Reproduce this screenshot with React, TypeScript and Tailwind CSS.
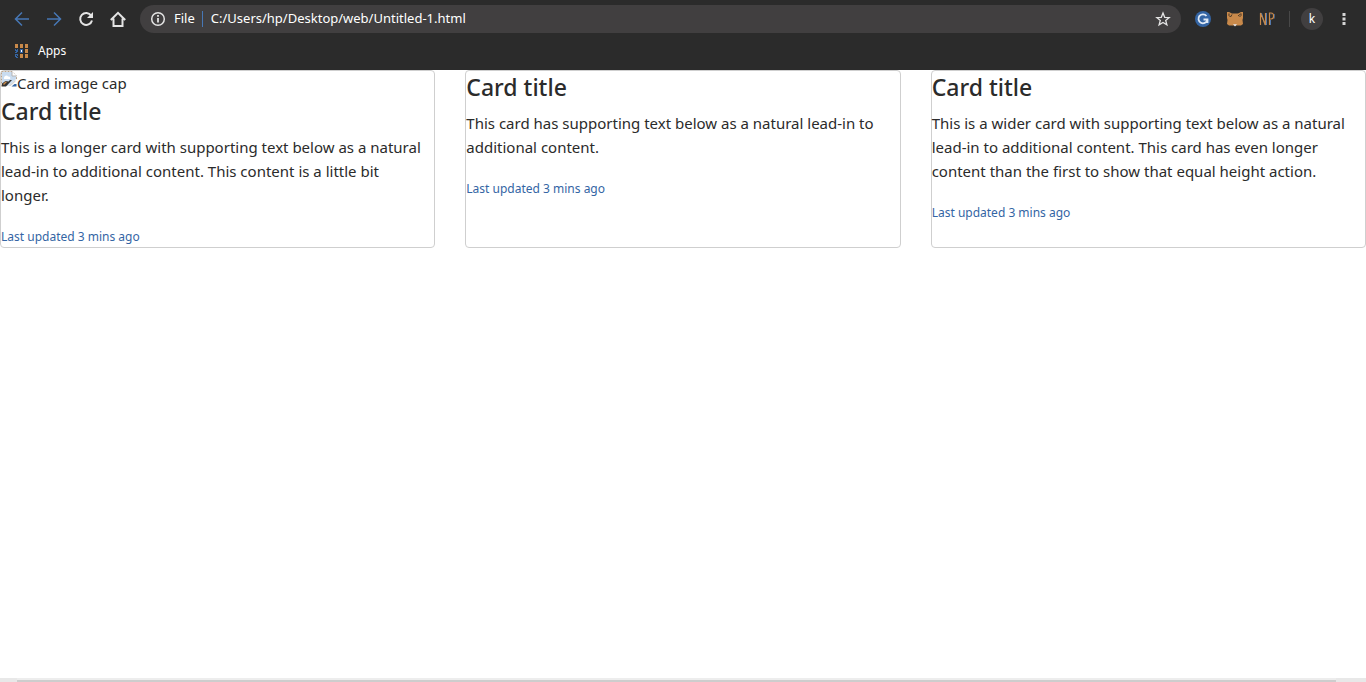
import React from "react";

const cards = [
  {
    image: true,
    text: "This is a longer card with supporting text below as a natural lead-in to additional content. This content is a little bit longer.",
  },
  {
    image: false,
    text: "This card has supporting text below as a natural lead-in to additional content.",
  },
  {
    image: false,
    text: "This is a wider card with supporting text below as a natural lead-in to additional content. This card has even longer content than the first to show that equal height action.",
  },
];

function Icon({ children }: { children: React.ReactNode }) {
  return (
    <svg viewBox="0 0 16 16" className="size-4 shrink-0" fill="none" aria-hidden="true">
      {children}
    </svg>
  );
}

function BrokenImage() {
  return (
    <Icon>
      <path d="M1 1h10l4 4v3L7 15H1z" fill="#c9dcf0" />
      <path d="M.5 15.500V.5h10.500l4.500 4.500v4" stroke="#b9a58e" strokeDasharray="2 1" />
      <path d="M11 .5V5h4.500" fill="#fff" stroke="#b4b4b4" />
      <path d="M3 7c0-2 3-3.500 4-1.500 2-.5 3 1.500 2 2.500H3z" fill="#fff" />
      <path d="M1 15.500v-3L4.500 10l3 .5L9 9h2l-6 6.500z" fill="#333" />
      <path d="M2 13l2.500-2.500 1.500.5-3 3z" fill="#c8894a" />
      <path d="M14.500 8.500v2L9.500 15H7.500z" fill="#d5d5d5" />
      <path d="M10.500 15.500l3-2.500h2v2.500z" fill="#3465a4" />
    </Icon>
  );
}

function Browser() {
  return (
    <header className="bg-[#2b2b2b] text-[13px] text-white">
      <div className="flex h-[38px] items-center px-[14px]">
        <nav className="flex gap-4">
          <button type="button" aria-label="Back">
            <Icon>
              <path d="M15 8H2M8 1.500L1.500 8 8 14.500" stroke="#4777b5" strokeWidth="1.500" />
            </Icon>
          </button>
          <button type="button" aria-label="Forward">
            <Icon>
              <path d="M1 8h13M8 1.500L14.500 8 8 14.500" stroke="#4777b5" strokeWidth="1.500" />
            </Icon>
          </button>
          <button type="button" aria-label="Reload">
            <Icon>
              <path d="M13.200 4.600A6 6 0 1 0 14 9.500" stroke="#e4e4e4" strokeWidth="2" />
              <path d="M15 1v6H9z" fill="#e4e4e4" />
            </Icon>
          </button>
          <button type="button" aria-label="Home">
            <Icon>
              <path d="M.8 9L8 1.800 15.200 9M3.500 7.500v7.500h9V7.500" stroke="#e4e4e4" strokeWidth="2" />
            </Icon>
          </button>
        </nav>
        <div className="ml-[14px] flex h-7 min-w-0 flex-1 items-center rounded-full bg-[#413f40] px-[10px]">
          <Icon>
            <circle cx="8" cy="8" r="6.300" stroke="#e4e4e4" strokeWidth="1.500" />
            <path d="M8 7v4.500M8 4v1.700" stroke="#e4e4e4" strokeWidth="1.800" />
          </Icon>
          <span className="ml-2">File</span>
          <span className="ml-[7px] h-4 w-px bg-[#4777b5]" />
          <input
            aria-label="Address"
            className="ml-2 min-w-0 flex-1 bg-transparent outline-none"
            defaultValue="C:/Users/hp/Desktop/web/Untitled-1.html"
          />
          <button type="button" aria-label="Bookmark this page">
            <Icon>
              <path d="M8 2l1.700 4.300 4.500.3-3.500 2.900 1.200 4.400L8 11.500l-3.900 2.400 1.200-4.400L1.800 6.600l4.500-.3z" stroke="#e4e4e4" strokeWidth="1.300" />
            </Icon>
          </button>
        </div>
        <div className="ml-[14px] flex items-center gap-4">
          <button type="button" aria-label="Grammar extension">
            <Icon>
              <circle cx="8" cy="8" r="8" fill="#3465a4" />
              <path d="M11.500 5A4.500 4.500 0 1 0 12.300 9M8.500 8.500h4V12" stroke="#dfe9f5" strokeWidth="1.800" />
            </Icon>
          </button>
          <button type="button" aria-label="Fox extension">
            <Icon>
              <path d="M0 1h2l3 1.500h6L14 1h2v6l-.5 2 .5 4-2 1.500H2L0 13l.5-4L0 7z" fill="#c8894a" />
              <path d="M2 2.500v2L3.500 6 5 3.500M14 2.500v2L12.500 6M13.500 3L11 5" stroke="#3b3025" strokeWidth=".9" />
              <path d="M6 13.200h4L8 15.500z" fill="#e6e8ef" />
            </Icon>
          </button>
          <button type="button" aria-label="NP extension">
            <Icon>
              <path d="M2.500 2l3.500 12M7.500 2v12M11.500 9v5M11.500 3h1M15.200 3v4.500" stroke="#4777b5" strokeWidth="1" />
              <path d="M1.500 14V2l5 12V2M10.500 14V2h1.500c3.500 0 3.500 6 0 6h-1.500" stroke="#c8894a" strokeWidth="1.200" />
            </Icon>
          </button>
        </div>
        <span className="ml-[14px] h-4 w-px bg-[#484848]" />
        <button type="button" aria-label="Profile" className="ml-[11px] size-[22px] rounded-full bg-[#413f40] text-xs leading-5">k</button>
        <button type="button" aria-label="Menu" className="ml-[13px]">
          <Icon>
            <path d="M6.500 2h3v3h-3zM6.500 6.500h3v3h-3zM6.500 11h3v3h-3z" fill="#d5d5d5" />
          </Icon>
        </button>
      </div>
      <div className="flex h-8 items-center px-[14px] pb-[6px]">
        <button type="button" className="flex items-center gap-2 text-xs">
          <Icon>
            <path d="M1 1h3v4H1zM6 1h3v4H6zM11 1h3v4h-3zM11 6h3v4h-3zM6 11h3v4H6zM11 11h3v4h-3z" fill="#c8894a" />
            <path d="M6 6h3v4H6zM1 6h3v4H1zM1 11h3v4H1z" fill="#3465a4" />
            <path d="M7 7h1v2H7z" fill="#fff" />
            <path d="M2 6h1v1H2zM1 8h1v1H1zM3 9h1v1H3zM2 12h1v1H2zM1 14h1v1H1zM3 13h1v1H3z" fill="#2b2b2b" />
          </Icon>
          Apps
        </button>
      </div>
    </header>
  );
}

export default function App() {
  return (
    <div className="flex min-h-screen flex-col bg-white font-['Noto_Sans',sans-serif] text-[#2b2b2b]">
      <Browser />
      <main className="grid grid-cols-3 gap-[30px] text-[15px] leading-6">
        {cards.map((card) => (
          <article key={card.text} className="rounded border border-[#cfcfcf]">
            {card.image && (
              <div className="flex">
                <BrokenImage />
                <span>Card image cap</span>
              </div>
            )}
            <h5 className="mb-2 text-[23px] leading-8 font-medium">Card title</h5>
            <p className="mb-4 pr-2">{card.text}</p>
            <p>
              <small className="text-xs leading-4 text-[#3465a4]">Last updated 3 mins ago</small>
            </p>
          </article>
        ))}
      </main>
      <footer className="mt-auto bg-[#e8e8e8] pr-[30px] pl-[17px]">
        <div className="h-1 border-t-2 border-[#ededed] bg-[#cdcdcd]" />
      </footer>
    </div>
  );
}
